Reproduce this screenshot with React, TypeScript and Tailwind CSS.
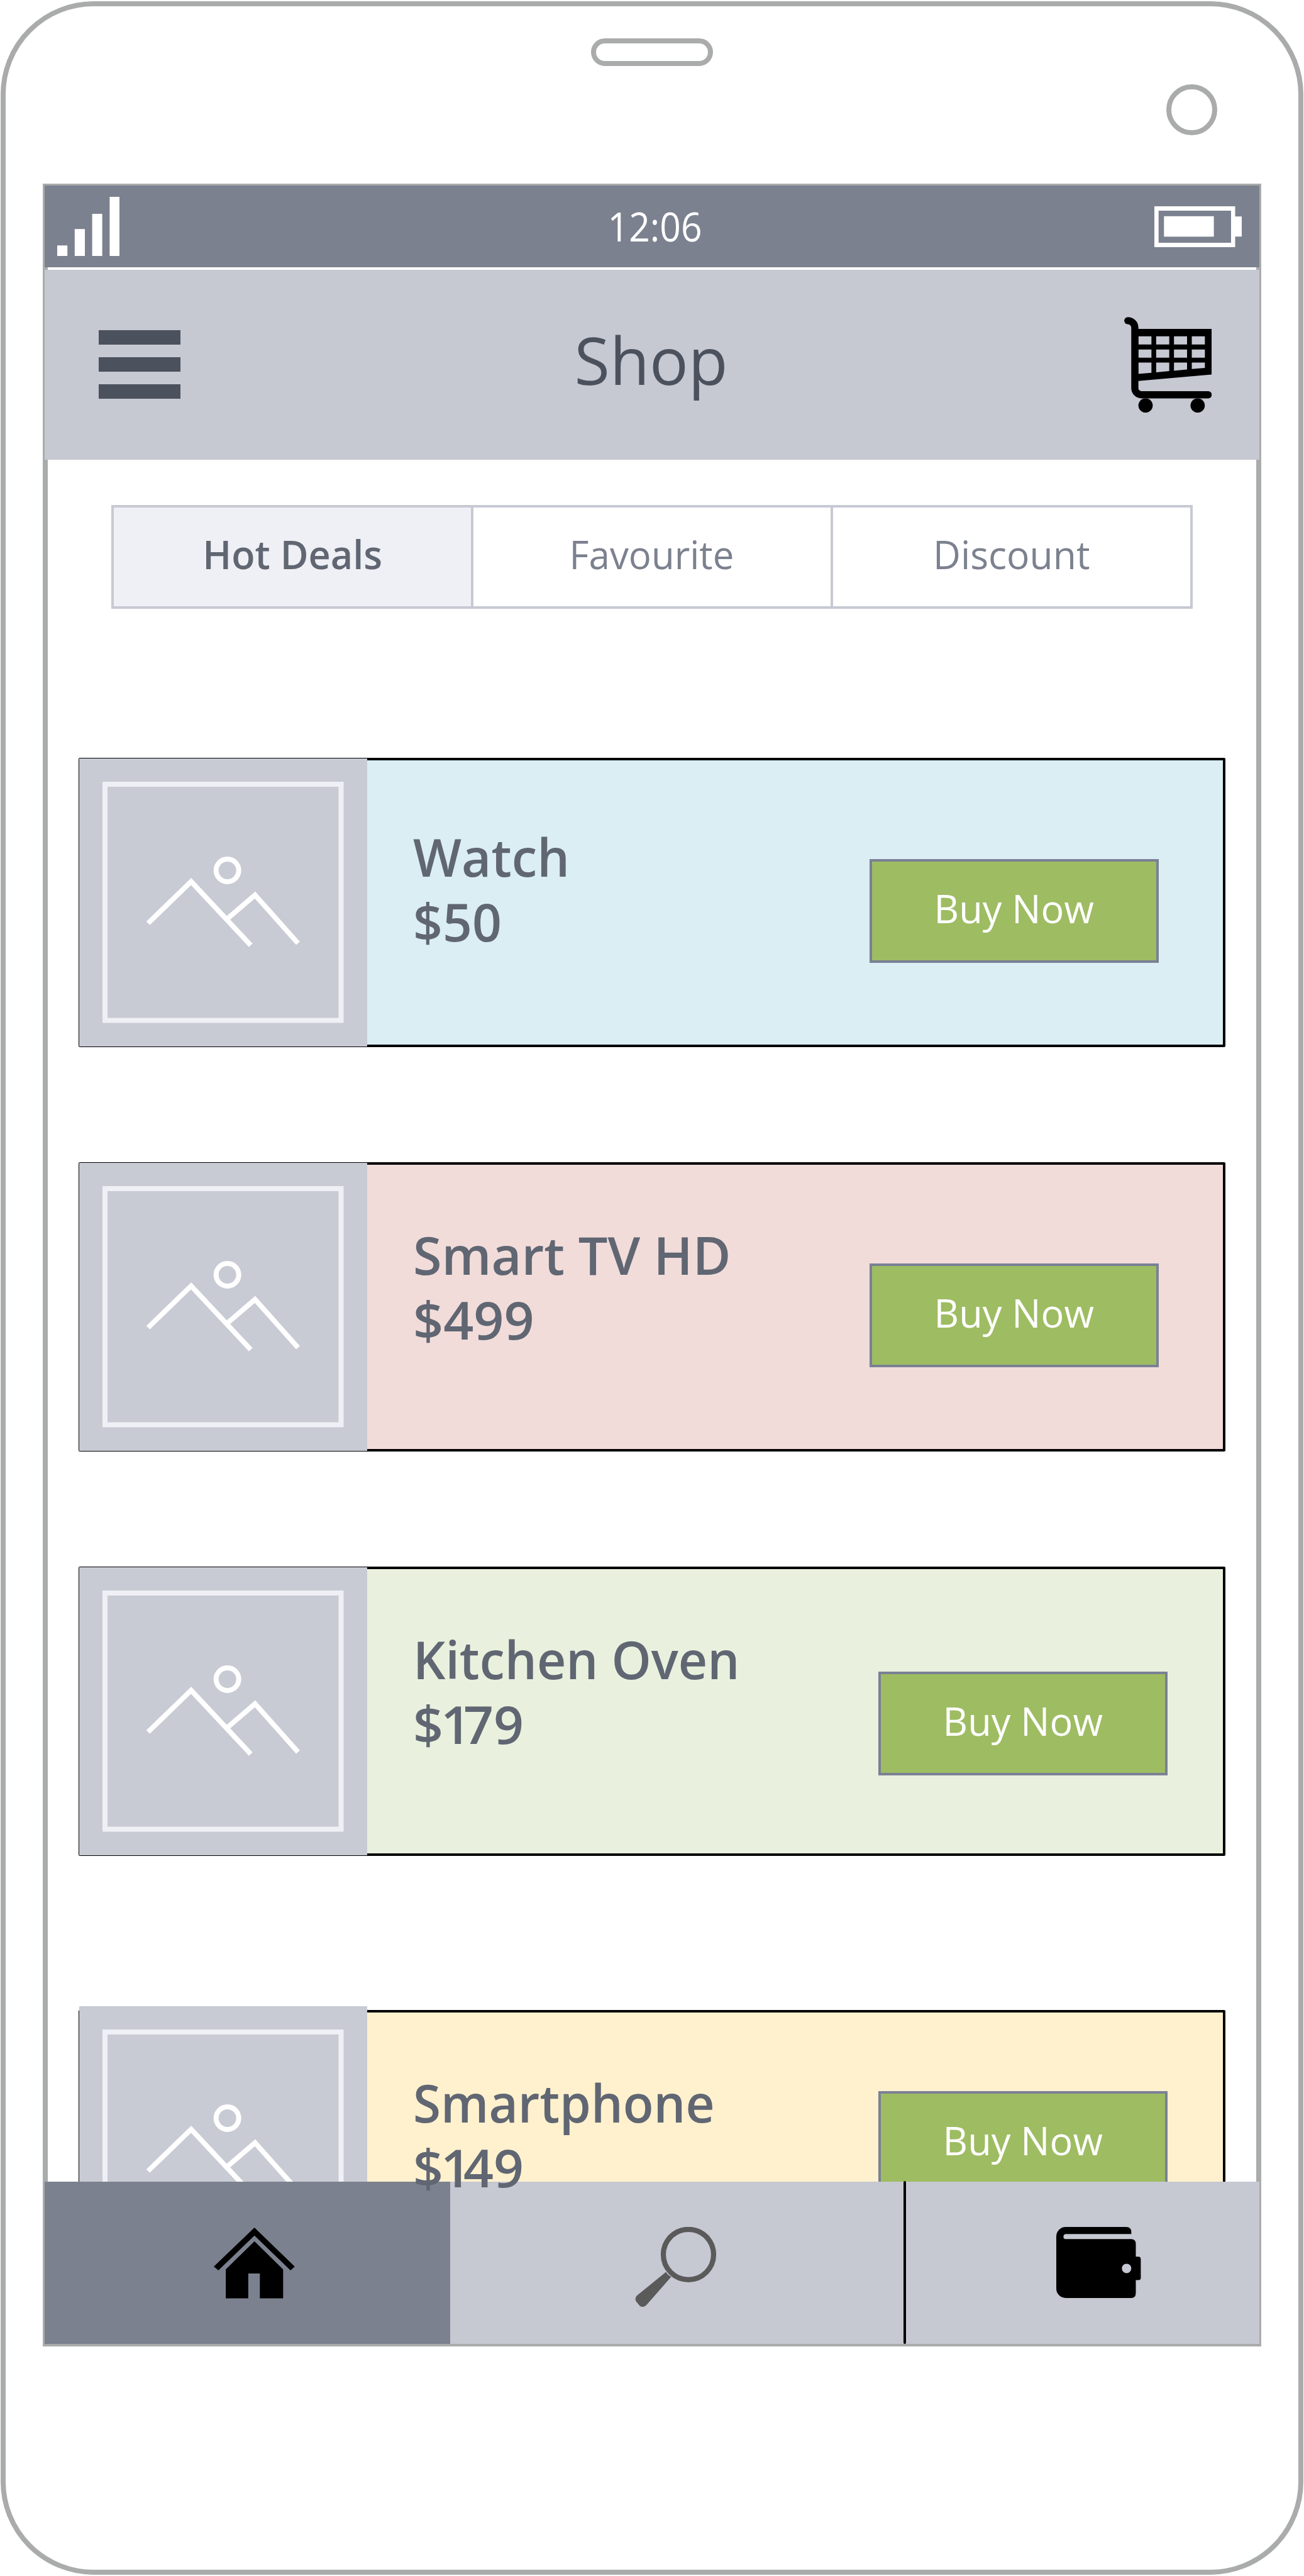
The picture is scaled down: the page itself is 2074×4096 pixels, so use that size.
type Product = {
  name: string
  price: string
  card: string
  thumb: string
  copy: string
  title: string
  amount: string
  button: string
}

const products: Product[] = [
  {
    name: 'Watch',
    price: '$50',
    card: 'bg-[#DAEEF4]',
    thumb: '-mt-[3px]',
    copy: 'mt-[102px] w-[726px]',
    title: 'scale-x-[0.971]',
    amount: 'scale-x-[0.978]',
    button: 'mt-[157px]',
  },
  {
    name: 'Smart TV HD',
    price: '$499',
    card: 'mt-[183px] bg-[#F1DCDA]',
    thumb: '-mt-[3px]',
    copy: 'mt-[92px] w-[726px]',
    title: 'scale-x-[0.986]',
    amount: 'scale-x-[1.003]',
    button: 'mt-[157px]',
  },
  {
    name: 'Kitchen Oven',
    price: '$179',
    card: 'mt-[183px] bg-[#E9F1DE]',
    thumb: '-mt-[3px]',
    copy: 'mt-[92px] w-[740px]',
    title: 'scale-x-[0.959]',
    amount: 'scale-x-100',
    button: 'mt-[163px]',
  },
  {
    name: 'Smartphone',
    price: '$149',
    card: 'mt-[245px] bg-[#FFF1CE]',
    thumb: '-mt-[10px]',
    copy: 'mt-[92px] w-[740px]',
    title: 'scale-x-[0.953]',
    amount: 'scale-x-100',
    button: 'mt-[125px]',
  },
]

function SignalIcon() {
  return (
    <svg className="mt-[18px] ml-5 h-[94px] w-[99px] shrink-0" viewBox="0 0 99 94" fill="#fff">
      <rect x="0" y="77.3" width="16.2" height="16.7" />
      <rect x="27.8" y="51.2" width="16.2" height="42.8" />
      <rect x="55.6" y="27" width="16" height="67" />
      <rect x="83.4" y="0" width="15.6" height="94" />
    </svg>
  )
}

function BatteryIcon() {
  return (
    <svg className="mt-[33px] mr-7 h-[65px] w-[139px] shrink-0" viewBox="0 0 139 65" fill="#fff">
      <path fillRule="evenodd" d="M0 0H128.5V65H0ZM6.7 7V58H122V7Z" />
      <rect x="15.3" y="15.8" width="79.3" height="32.5" />
      <rect x="128" y="16.2" width="11" height="32" />
    </svg>
  )
}

function MenuIcon() {
  return (
    <div className="mt-[96px] ml-[86px] flex w-[130px] shrink-0 flex-col gap-5">
      <div className="h-[23px] bg-[#4B515D]" />
      <div className="h-[23px] bg-[#4B515D]" />
      <div className="h-[23px] bg-[#4B515D]" />
    </div>
  )
}

function CartIcon() {
  return (
    <svg className="mt-[74.5px] mr-[76px] h-[152.4px] w-[139.5px] shrink-0" viewBox="76 65 650 710">
      <path
        d="M103 92.5A52 52 0 0 1 155 144V592A49 49 0 0 0 204 641.5H699"
        fill="none"
        stroke="#000"
        strokeWidth="53"
        strokeLinecap="round"
      />
      <path
        fillRule="evenodd"
        d="M155 154H726V491L155 541ZM181 208V269H278V208ZM313 208V269H410V208ZM445 208V269H542V208ZM577 208V269H674V208ZM181 306V367H278V306ZM313 306V367H410V306ZM445 306V367H542V306ZM577 306V367H674V306ZM181 403V487L278 478V403ZM313 403V475L410 466V403ZM445 403V463L542 454V403ZM577 403V451L674 442V403Z"
      />
      <circle cx="234.5" cy="721" r="53" />
      <circle cx="620.5" cy="721" r="53" />
    </svg>
  )
}

function HomeIcon() {
  return (
    <svg className="mt-[73px] ml-[269px] h-[113px] w-[129px]" viewBox="0 0 129 113">
      <path d="M64.7 0L128.8 62L122 68.1L64.7 12.7L7.4 68.1L0 62Z" />
      <path d="M64.7 21.7L110.3 66.5V112.5H73.3V73.1H54.9V112.5H19.1V66.5Z" />
    </svg>
  )
}

function SearchIcon() {
  return (
    <svg className="mt-[72px] ml-[294px] h-[128px] w-[130px]" viewBox="0 0 130 128" fill="#5A5A5A">
      <circle cx="85" cy="43.8" r="40" fill="none" stroke="#5A5A5A" strokeWidth="8.2" />
      <path d="M49.3 71.5Q52 77 57.8 78.9L18.5 123.7Q15.5 127 12.8 127Q10.5 127.3 7.8 125.7L1.4 117.9Q-0.6 113.5 2.8 109.3Z" />
    </svg>
  )
}

function WalletIcon() {
  return (
    <svg className="mt-[72px] ml-[239px] h-[113px] w-[135px]" viewBox="0 0 135 113">
      <path
        fillRule="evenodd"
        d="M15 0H111Q119.3 0 119.3 8V11.2H15Q11.4 12 11.4 15.2Q11.4 18.5 14 19.3H119Q126.5 19.3 126.5 27V47.2H130.5Q134.4 47.2 134.4 51V81Q134.4 84.6 130.5 84.6H126.5V105Q126.5 113 119 113H15A15 15 0 0 1 0 98V15A15 15 0 0 1 15 0ZM111.8 58.4A7.5 7.5 0 1 0 111.8 73.4A7.5 7.5 0 1 0 111.8 58.4Z"
      />
    </svg>
  )
}

function Thumbnail({ className }: { className: string }) {
  return (
    <svg className={`${className} -ml-[3px] h-[458px] w-[458px] shrink-0 bg-[#C8CAD4]`} viewBox="0 0 458 458" fill="none">
      <rect x="41" y="41" width="375.5" height="375.5" stroke="#EFF0F5" strokeWidth="8" />
      <circle cx="235.7" cy="178" r="18" stroke="#fff" strokeWidth="8" />
      <path d="M109.5 262L178 195.7L272.8 297M236 254.5L279.6 217.2L348 293.8" stroke="#fff" strokeWidth="8" />
    </svg>
  )
}

const tracking: Record<string, string> = {
  $1: 'tracking-[-4px]',
  '1': 'tracking-[-12px]',
}

/* The digit one is set tighter than the other figures. */
function Price({ value, className }: { value: string; className: string }) {
  return (
    <p className={`origin-left whitespace-nowrap ${className}`}>
      {value.startsWith('$1') ? (
        <>
          <span className={tracking.$1}>$</span>
          <span className={tracking['1']}>1</span>
          {value.slice(2)}
        </>
      ) : (
        value
      )}
    </p>
  )
}

function ProductCard({ product }: { product: Product }) {
  return (
    <article className={`ml-[49px] flex h-[460px] w-[1824px] shrink-0 items-start rounded-[2px] border-4 border-black ${product.card}`}>
      <Thumbnail className={product.thumb} />
      <div className={`relative z-20 ml-[73px] shrink-0 text-[84px] leading-[102.6px] font-semibold text-[#606672] ${product.copy}`}>
        <h2 className={`origin-left whitespace-nowrap ${product.title}`}>{product.name}</h2>
        <Price value={product.price} className={product.amount} />
      </div>
      <button
        className={`flex h-[165px] w-[460px] shrink-0 items-center justify-center border-4 border-[#7A8095] bg-[#9EBC62] pb-2 text-[63px] text-white ${product.button}`}
      >
        <span className="scale-x-[0.973]">Buy Now</span>
      </button>
    </article>
  )
}

export default function App() {
  return (
    <div className="h-[4096px] w-[2074px] overflow-hidden bg-white pt-[2px] pl-px font-['Open_Sans','Noto_Sans',sans-serif]">
      <div className="flex h-[4092px] w-[2072px] flex-col rounded-[148px] border-8 border-[#AAACAB] bg-white">
        <div className="mt-[51px] h-[44px] w-[194px] shrink-0 self-center rounded-[22px] border-8 border-[#AAACAB]" />
        <div className="mt-[29px] ml-[1846px] size-[81px] shrink-0 rounded-full border-8 border-[#AAACAB]" />

        <main className="mt-[77px] ml-[59px] flex h-[3439px] w-[1938px] shrink-0 flex-col border-8 border-[#AAACAB]">
          <div className="-mx-[5px] -mt-[5px] flex h-[130px] shrink-0 items-start bg-[#7C818F]">
            <SignalIcon />
            <div className="flex-1 pl-[58px] text-center text-[64px] leading-[130px] text-white">
              <span className="inline-block scale-x-[0.919]">12:06</span>
            </div>
            <BatteryIcon />
          </div>

          <header className="-mx-[5px] mt-1 flex h-[302px] shrink-0 items-start bg-[#C6C8D2]">
            <MenuIcon />
            <h1 className="mt-[71px] flex-1 pr-[3px] text-center text-[105px] leading-[143px] text-[#4B525D]">
              <span className="inline-block scale-x-[0.979]">Shop</span>
            </h1>
            <CartIcon />
          </header>

          <nav className="mt-[72px] ml-[101px] flex h-[165px] w-[1720px] shrink-0 border-4 border-[#C7C9D3] text-[63px] text-[#7C818F]">
            <a className="flex w-[572px] items-center justify-center border-r-4 border-[#C7C9D3] bg-[#EFF0F5] pb-2 pl-px font-semibold text-[#606672]">
              <span className="scale-x-[0.971]">Hot Deals</span>
            </a>
            <a className="flex w-[572px] items-center justify-center border-r-4 border-[#C7C9D3] pb-2">
              <span className="scale-x-[0.952]">Favourite</span>
            </a>
            <a className="flex w-[568px] items-center justify-center pb-2">
              <span className="scale-x-[0.962]">Discount</span>
            </a>
          </nav>

          <section className="mt-[237px] flex h-[2264px] shrink-0 flex-col">
            {products.map((product) => (
              <ProductCard key={product.name} product={product} />
            ))}
          </section>

          <nav className="relative z-10 -mx-[5px] flex h-[258px] shrink-0 items-stretch bg-[#C6C8D2]">
            <div className="w-[645px] bg-[#7C818F]">
              <HomeIcon />
            </div>
            <div className="w-[721px]">
              <SearchIcon />
            </div>
            <div className="-mt-px w-1 rounded-full bg-black" />
            <div className="w-[562px]">
              <WalletIcon />
            </div>
          </nav>
        </main>
      </div>
    </div>
  )
}
